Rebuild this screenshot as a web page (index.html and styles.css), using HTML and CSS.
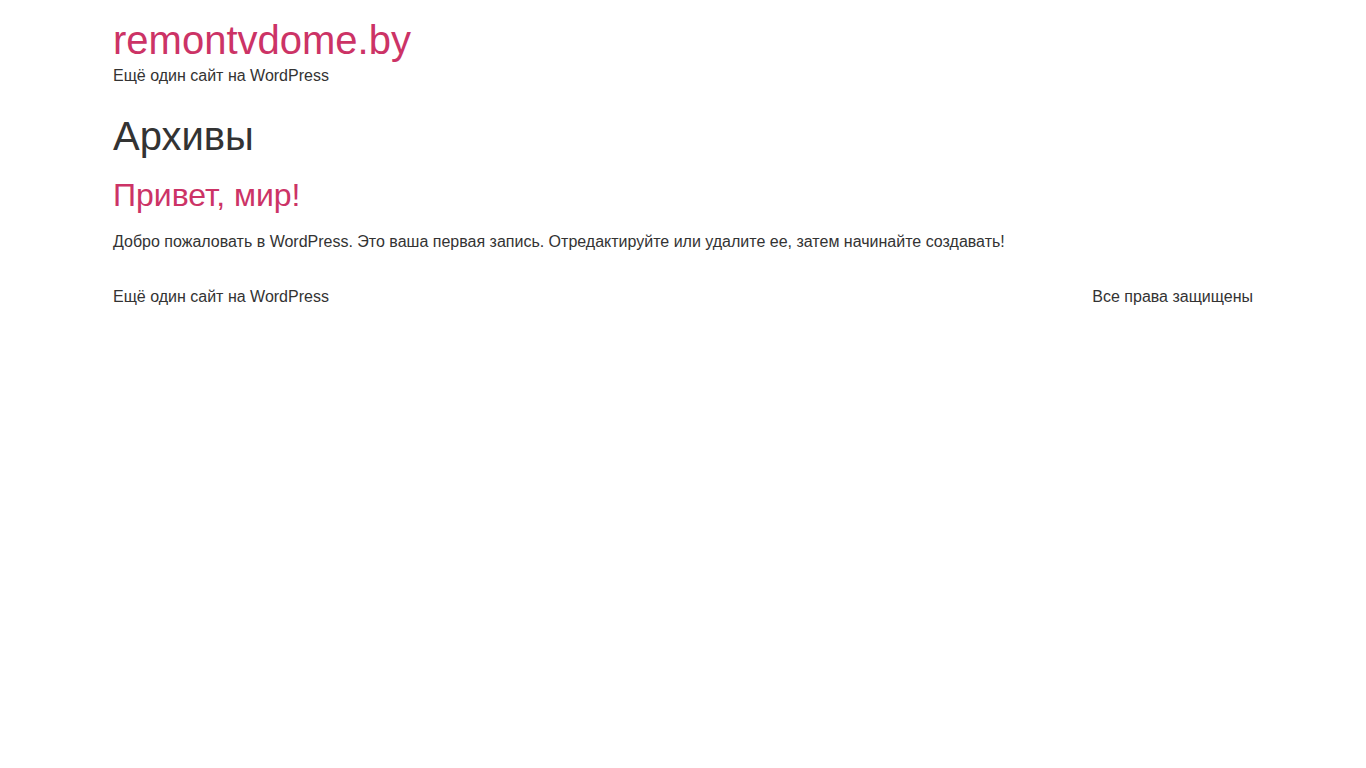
FILE: index.html
```html
<!DOCTYPE html>
<html lang="ru">
<head>
    <meta charset="UTF-8">
    <meta name="viewport" content="width=device-width, initial-scale=1.0">
    <title>Архивы – remontvdome.by</title>
    <link rel="stylesheet" href="styles.css">
</head>
<body>
    <header class="site-header">
        <div class="site-branding">
            <div class="site-title"><a href="#">remontvdome.by</a></div>
            <p class="site-description">Ещё один сайт на WordPress</p>
        </div>
    </header>

    <main class="site-main">
        <header class="page-header">
            <h1 class="page-title">Архивы</h1>
        </header>
        <div class="page-content">
            <article class="post">
                <h2 class="entry-title"><a href="#">Привет, мир!</a></h2>
                <p>Добро пожаловать в WordPress. Это ваша первая запись. Отредактируйте или удалите ее, затем начинайте создавать!</p>
            </article>
        </div>
    </main>

    <footer class="site-footer">
        <div class="site-branding">
            <p class="site-description">Ещё один сайт на WordPress</p>
        </div>
        <div class="copyright">
            <p>Все права защищены</p>
        </div>
    </footer>
</body>
</html>
```

FILE: styles.css
```css
body {
    margin: 0;
    font-family: "Liberation Sans", Arial, sans-serif;
    font-size: 16px;
    line-height: 1.5;
    color: #333;
    background-color: #fff;
}
a {
    color: #c36;
    text-decoration: none;
}
h1, h2 {
    font-weight: 500;
    line-height: 1.2;
    color: inherit;
    margin: 8px 0 16px;
}
h1 {
    font-size: 40px;
}
h2 {
    font-size: 32px;
}
p {
    margin: 0 0 14.4px;
}
.site-header,
.site-main,
.site-footer {
    max-width: 1140px;
    margin: 0 auto;
}
.site-header {
    display: flex;
    justify-content: space-between;
    padding: 16px 0;
}
.site-title {
    font-size: 40px;
    line-height: 1.2;
}
.site-description {
    margin: 0;
}
.site-main .page-title {
    font-size: 40px;
}
.site-footer {
    display: flex;
    justify-content: space-between;
    align-items: center;
    padding: 16px 0;
}
.site-footer p {
    margin: 0;
}
```
